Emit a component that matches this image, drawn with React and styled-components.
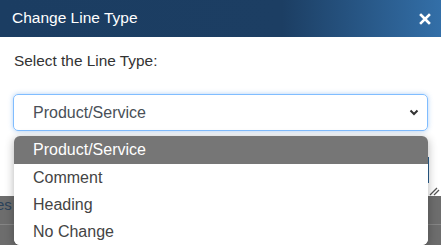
import React from 'react';
import styled, { createGlobalStyle } from 'styled-components';

const GlobalStyle = createGlobalStyle`
  html, body {
    margin: 0;
    padding: 0;
    overflow: hidden;
    background: #6d6d6d;
  }
  body {
    font-family: 'Liberation Sans', Arial, sans-serif;
  }
`;

const Page = styled.div`
  width: 441px;
  height: 245px;
  position: relative;
  display: flex;
  flex-direction: column;
  overflow: hidden;
`;

const Header = styled.div`
  height: 37px;
  flex: none;
  display: flex;
  align-items: center;
  justify-content: space-between;
  padding: 0 10px 0 12px;
  box-sizing: border-box;
  background: linear-gradient(90deg, #1b3d62 0%, #1c3e63 64%, #336fa8 100%);
  color: #fff;
`;

const Title = styled.h5`
  margin: 0;
  font-size: 15.5px;
  font-weight: 400;
  line-height: 1;
  padding-bottom: 1px;
`;

const Close = styled.button`
  border: 0;
  background: none;
  padding: 0;
  width: 12px;
  height: 12px;
  display: flex;
  cursor: pointer;
`;

const Body = styled.div`
  height: 159px;
  flex: none;
  background: #fff;
  padding: 0 13px 0 13px;
  box-sizing: border-box;
  display: flex;
  flex-direction: column;
`;

const Label = styled.p`
  margin: 15px 0 0 1px;
  font-size: 15.4px;
  line-height: 17px;
  color: #333;
`;

const SelectWrap = styled.div`
  margin-top: 25px;
  position: relative;
  height: 37px;
  border: 1px solid #80bdff;
  border-radius: 5px;
  box-shadow: 0 0 5px rgba(80, 150, 230, 0.45);
  display: flex;
  align-items: center;
  justify-content: space-between;
  padding: 0 8px 0 19px;
  box-sizing: border-box;
  font-size: 16px;
  color: #495057;
`;

const Lower = styled.div`
  margin-top: 25px;
  display: flex;
  align-items: flex-end;
  flex: 1;
  margin-right: -13px;
`;

const SaveButton = styled.div`
  width: 120px;
  height: 26px;
  margin: 0 0 13px auto;
  background: #2e6da4;
  border: 1px solid #2a5f8f;
  box-sizing: border-box;
`;

const Resize = styled.div`
  width: 12px;
  height: 9px;
  display: flex;
`;

const Backdrop = styled.div`
  flex: 1;
  background: #6d6d6d;
  display: flex;
  flex-direction: column;
`;

const BehindText = styled.div`
  height: 28px;
  font-size: 15px;
  line-height: 17px;
  color: #2b425a;
  margin-left: -4px;
  border-bottom: 1px solid #858585;
`;

const Menu = styled.ul`
  position: absolute;
  left: 14px;
  top: 136px;
  width: 414px;
  margin: 0;
  padding: 0;
  list-style: none;
  background: #fff;
  border-radius: 6px;
  box-shadow: 0 2px 10px rgba(0, 0, 0, 0.3);
  overflow: hidden;
  font-size: 16px;
`;

const Option = styled.li`
  height: 27px;
  line-height: 28px;
  padding-left: 19px;
  color: ${(p) => (p.active ? '#fff' : '#444')};
  background: ${(p) => (p.active ? '#767676' : '#fff')};
  &:first-child {
    height: 28px;
  }
`;

const options = ['Product/Service', 'Comment', 'Heading', 'No Change'];

const App = () => {
  return (
    <Page>
      <GlobalStyle />
      <Header>
        <Title>Change Line Type</Title>
        <Close aria-label="close">
          <svg width="12" height="12" viewBox="0 0 12 12">
            <path d="M2 2 L10 10 M10 2 L2 10" stroke="#fff" strokeWidth="2.6" strokeLinecap="square" />
          </svg>
        </Close>
      </Header>
      <Body>
        <Label>Select the Line Type:</Label>
        <SelectWrap>
          <span>Product/Service</span>
          <svg width="10" height="7" viewBox="0 0 10 7">
            <path d="M1.5 1.5 L5 5 L8.5 1.5" fill="none" stroke="#333" strokeWidth="2" />
          </svg>
        </SelectWrap>
        <Lower>
          <SaveButton />
          <Resize>
            <svg width="12" height="9" viewBox="0 0 12 9">
              <path d="M1 8 L8 1 M5 8 L10 3" stroke="#555" strokeWidth="1.3" />
            </svg>
          </Resize>
        </Lower>
      </Body>
      <Backdrop>
        <BehindText>es</BehindText>
      </Backdrop>
      <Menu>
        {options.map((o, i) => (
          <Option key={o} active={i === 0}>
            {o}
          </Option>
        ))}
      </Menu>
    </Page>
  );
};

export default App;
